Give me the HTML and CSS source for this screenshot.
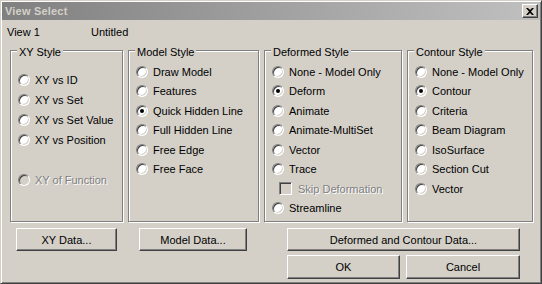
FILE: index.html
```html
<!DOCTYPE html>
<html lang="en">
<head>
  <meta charset="UTF-8" />
  <title>View Select</title>
  <link rel="stylesheet" href="styles.css">
</head>
<body>
  <div class="window">
    <div class="titlebar">
      <span class="title">View Select</span>
      <span class="close">
        <svg width="8" height="7" viewBox="0 0 8 7"><path d="M0 0h2l2 2 2-2h2L5 3.5 8 7H6L4 5 2 7H0l3-3.5z" fill="#000"/></svg>
      </span>
    </div>

    <div class="info">
      <span class="view-name">View 1</span>
      <span>Untitled</span>
    </div>

    <div class="groups">
      <fieldset class="group g-xy">
        <legend>XY Style</legend>
        <ul class="opts xy">
          <li><span class="radio"></span>XY vs ID</li>
          <li><span class="radio"></span>XY vs Set</li>
          <li><span class="radio"></span>XY vs Set Value</li>
          <li><span class="radio"></span>XY vs Position</li>
          <li class="disabled spaced"><span class="radio"></span>XY of Function</li>
        </ul>
      </fieldset>

      <fieldset class="group g-model">
        <legend>Model Style</legend>
        <ul class="opts">
          <li><span class="radio"></span>Draw Model</li>
          <li><span class="radio"></span>Features</li>
          <li><span class="radio on"></span>Quick Hidden Line</li>
          <li><span class="radio"></span>Full Hidden Line</li>
          <li><span class="radio"></span>Free Edge</li>
          <li><span class="radio"></span>Free Face</li>
        </ul>
      </fieldset>

      <fieldset class="group g-deform">
        <legend>Deformed Style</legend>
        <ul class="opts">
          <li><span class="radio"></span>None - Model Only</li>
          <li><span class="radio on"></span>Deform</li>
          <li><span class="radio"></span>Animate</li>
          <li><span class="radio"></span>Animate-MultiSet</li>
          <li><span class="radio"></span>Vector</li>
          <li><span class="radio"></span>Trace</li>
          <li class="disabled sub"><span class="check"></span>Skip Deformation</li>
          <li><span class="radio"></span>Streamline</li>
        </ul>
      </fieldset>

      <fieldset class="group g-contour">
        <legend>Contour Style</legend>
        <ul class="opts">
          <li><span class="radio"></span>None - Model Only</li>
          <li><span class="radio on"></span>Contour</li>
          <li><span class="radio"></span>Criteria</li>
          <li><span class="radio"></span>Beam Diagram</li>
          <li><span class="radio"></span>IsoSurface</li>
          <li><span class="radio"></span>Section Cut</li>
          <li><span class="radio"></span>Vector</li>
        </ul>
      </fieldset>
    </div>

    <div class="actions">
      <button class="btn b-xy">XY Data...</button>
      <button class="btn b-model">Model Data...</button>
      <div class="actions-right">
        <button class="btn b-dc">Deformed and Contour Data...</button>
        <div class="ok-row">
          <button class="btn b-ok">OK</button>
          <button class="btn b-cancel">Cancel</button>
        </div>
      </div>
    </div>
  </div>
</body>
</html>
```

FILE: styles.css
```css
* {box-sizing: border-box;}
body {margin: 0; background: #d4d0c8; font-family: "Liberation Sans", Arial, sans-serif; font-size: 11px; color: #000;}

.window {
  width: 542px; height: 284px;
  background: #d4d0c8;
  border: 1px solid; border-color: #d4d0c8 #404040 #404040 #d4d0c8;
  box-shadow: inset 1px 1px #fff, inset -1px -1px #808080;
  padding: 1px;
}

.titlebar {
  height: 18px;
  display: flex; align-items: center; justify-content: space-between;
  padding: 0 2px 0 3px;
  background: linear-gradient(to right, #808080, #c0c0c0);
}
.title {color: #d4d0c8; font-weight: bold; letter-spacing: 0.2px;}
.close {
  width: 16px; height: 14px;
  display: flex; align-items: center; justify-content: center;
  background: #d4d0c8;
  border: 1px solid; border-color: #fff #404040 #404040 #fff;
  box-shadow: inset -1px -1px #808080;
}

.info {display: flex; height: 13px; line-height: 13px; margin: 6px 0 3px 5px;}
.view-name {width: 84px;}

.groups {display: flex; gap: 5px; padding-left: 8px;}
.group {
  margin: 0; padding: 0 0 0 7px; height: 180px;
  border: 1px solid #808080;
  box-shadow: 1px 1px 0 #fff, inset 1px 1px 0 #fff;
}
.group legend {margin-left: -1px; padding: 4px 2px 0; line-height: 13px; background: #d4d0c8;}
.g-xy {width: 113px;}
.g-model {width: 131px;}
.g-deform {width: 138px;}
.g-contour {width: 126px;}

.opts {list-style: none; margin: 0; padding: 3px 0 0;}
.opts.xy {padding-top: 11px;}
.opts li {display: flex; align-items: center; gap: 5px; height: 19.5px; white-space: nowrap;}
.opts.xy li {height: 20px;}
.opts li.spaced {margin-top: 20px;}
.opts li.sub {padding-left: 7px; gap: 6px;}
.disabled {color: #808080; text-shadow: 1px 1px 0 #fff;}

.radio {
  width: 12px; height: 12px; flex: none;
  border-radius: 50%;
  border: 1px solid; border-color: #808080 #fff #fff #808080;
  background: #fff;
  box-shadow: inset 1px 1px #404040, inset -1px -1px #d4d0c8;
  display: flex; align-items: center; justify-content: center;
}
.radio.on::after {content: ""; width: 4px; height: 4px; border-radius: 50%; background: #000;}
.disabled .radio {background: #d4d0c8;}
.check {
  width: 13px; height: 13px; flex: none;
  border: 1px solid; border-color: #808080 #fff #fff #808080;
  background: #d4d0c8;
  box-shadow: inset 1px 1px #404040, inset -1px -1px #d4d0c8;
}

.actions {display: flex; align-items: flex-start; margin-top: 6px; padding-left: 14px;}
.btn {
  height: 23px; padding: 0;
  font: inherit; color: #000;
  background: #d4d0c8;
  border: 1px solid; border-color: #fff #404040 #404040 #fff;
  box-shadow: inset -1px -1px #808080, inset 1px 1px #d4d0c8;
}
.b-xy {width: 101px;}
.b-model {width: 108px; margin-left: 22px;}
.actions-right {display: flex; flex-direction: column; gap: 4px; margin-left: 40px;}
.b-dc {width: 233px;}
.ok-row {display: flex; gap: 6px;}
.b-ok {width: 113px; height: 24px;}
.b-cancel {width: 114px; height: 24px;}
```
